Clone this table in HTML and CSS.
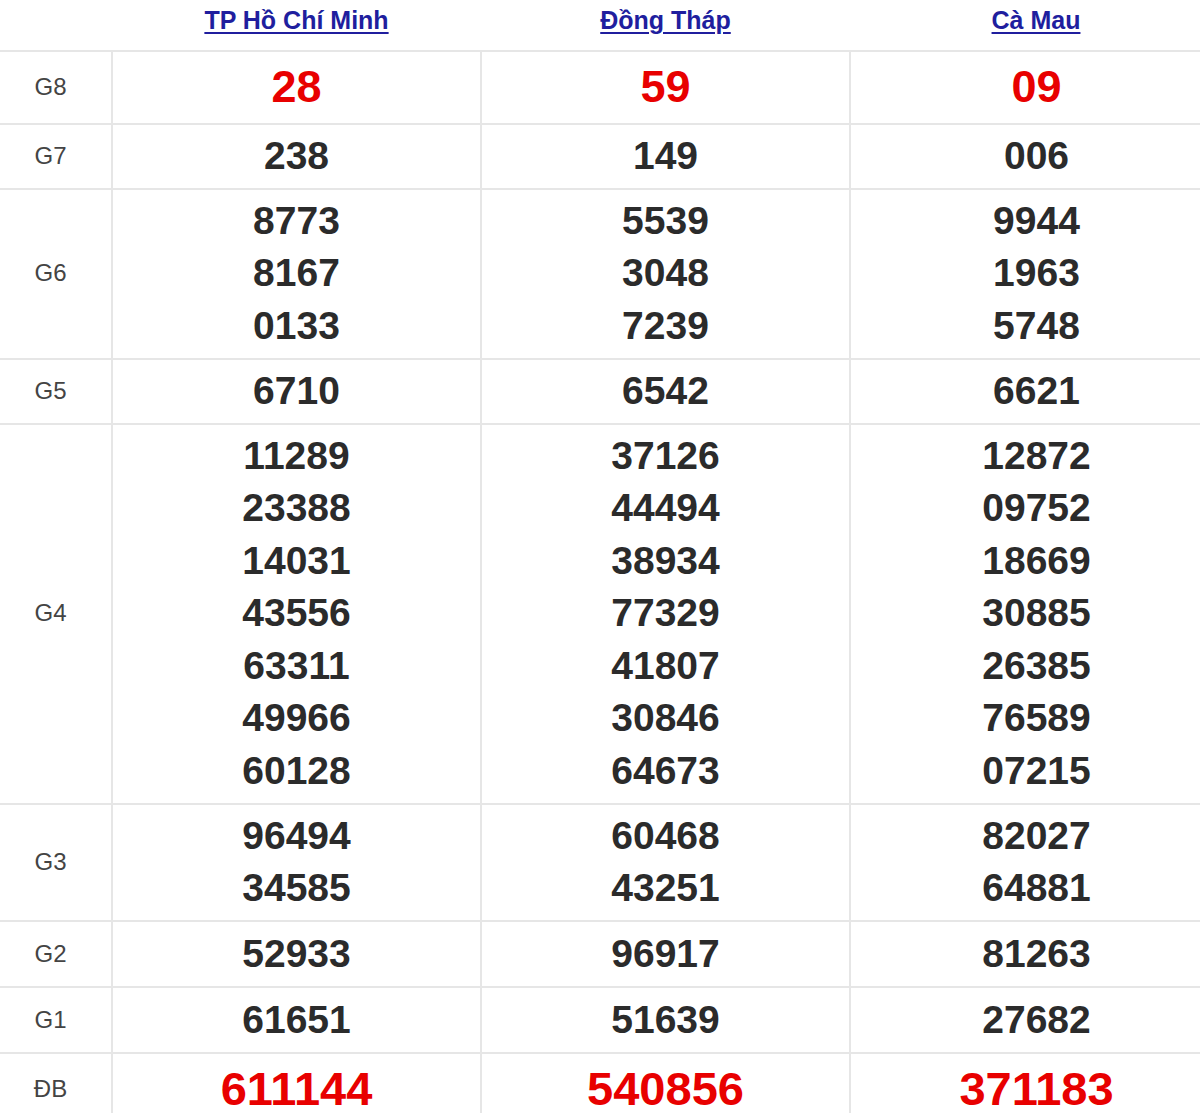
FILE: index.html
```html
<!DOCTYPE html>
<html lang="vi">
<head>
<meta charset="utf-8">
<title>Kết quả xổ số</title>
<link rel="stylesheet" href="styles.css">
</head>
<body>
<table class="kq">
  <colgroup>
    <col class="c-label">
    <col class="c-prov">
    <col class="c-prov">
    <col class="c-prov-last">
  </colgroup>
  <thead>
    <tr>
      <th></th>
      <th><a href="#">TP Hồ Chí Minh</a></th>
      <th><a href="#">Đồng Tháp</a></th>
      <th><a href="#">Cà Mau</a></th>
    </tr>
  </thead>
  <tbody>
    <tr class="big">
      <td class="lbl">G8</td>
      <td><div class="red">28</div></td>
      <td><div class="red">59</div></td>
      <td><div class="red">09</div></td>
    </tr>
    <tr>
      <td class="lbl">G7</td>
      <td><div>238</div></td>
      <td><div>149</div></td>
      <td><div>006</div></td>
    </tr>
    <tr>
      <td class="lbl">G6</td>
      <td><div>8773</div><div>8167</div><div>0133</div></td>
      <td><div>5539</div><div>3048</div><div>7239</div></td>
      <td><div>9944</div><div>1963</div><div>5748</div></td>
    </tr>
    <tr>
      <td class="lbl">G5</td>
      <td><div>6710</div></td>
      <td><div>6542</div></td>
      <td><div>6621</div></td>
    </tr>
    <tr>
      <td class="lbl">G4</td>
      <td><div>11289</div><div>23388</div><div>14031</div><div>43556</div><div>63311</div><div>49966</div><div>60128</div></td>
      <td><div>37126</div><div>44494</div><div>38934</div><div>77329</div><div>41807</div><div>30846</div><div>64673</div></td>
      <td><div>12872</div><div>09752</div><div>18669</div><div>30885</div><div>26385</div><div>76589</div><div>07215</div></td>
    </tr>
    <tr>
      <td class="lbl">G3</td>
      <td><div>96494</div><div>34585</div></td>
      <td><div>60468</div><div>43251</div></td>
      <td><div>82027</div><div>64881</div></td>
    </tr>
    <tr class="loose">
      <td class="lbl">G2</td>
      <td><div>52933</div></td>
      <td><div>96917</div></td>
      <td><div>81263</div></td>
    </tr>
    <tr class="loose">
      <td class="lbl">G1</td>
      <td><div>61651</div></td>
      <td><div>51639</div></td>
      <td><div>27682</div></td>
    </tr>
    <tr class="big special">
      <td class="lbl">ĐB</td>
      <td><div class="red">611144</div></td>
      <td><div class="red">540856</div></td>
      <td><div class="red">371183</div></td>
    </tr>
  </tbody>
</table>
</body>
</html>
```

FILE: styles.css
```css
html, body {
  margin: 0;
  padding: 0;
  background: #ffffff;
  overflow: hidden;
}

body {
  font-family: "Liberation Sans", Arial, sans-serif;
  color: #2d2d2d;
}

.kq {
  border-collapse: collapse;
  table-layout: fixed;
  width: 1222px;
}

.c-label { width: 112px; }
.c-prov { width: 369px; }
.c-prov-last { width: 372px; }

.kq th {
  padding: 5px 0 15px;
  line-height: 30px;
  font-size: 25px;
  font-weight: bold;
  text-align: center;
  border-bottom: 2px solid #e6e6e6;
}

.kq th a {
  color: #201e9e;
  text-decoration: underline;
  text-decoration-thickness: 2px;
  text-underline-offset: 3px;
}

.kq td {
  border: 2px solid #e6e6e6;
  border-left: none;
  text-align: center;
  vertical-align: middle;
  padding: 5px 0 5.5px;
  font-size: 39px;
  font-weight: bold;
  line-height: 52.5px;
  color: #2b2b2b;
}

.kq td:last-child {
  border-right: none;
}

.kq tr.loose td {
  padding-top: 5.5px;
  padding-bottom: 6px;
}

.kq td.lbl {
  font-size: 24px;
  font-weight: normal;
  color: #444444;
  padding-right: 10px;
  line-height: 30px;
}

.kq tr.big td {
  font-size: 45px;
  line-height: 60px;
}

.kq tr.special td {
  font-size: 47px;
}

.kq tr.big td.lbl {
  font-size: 24px;
  line-height: 30px;
}

.red {
  color: #e80000;
}
```
